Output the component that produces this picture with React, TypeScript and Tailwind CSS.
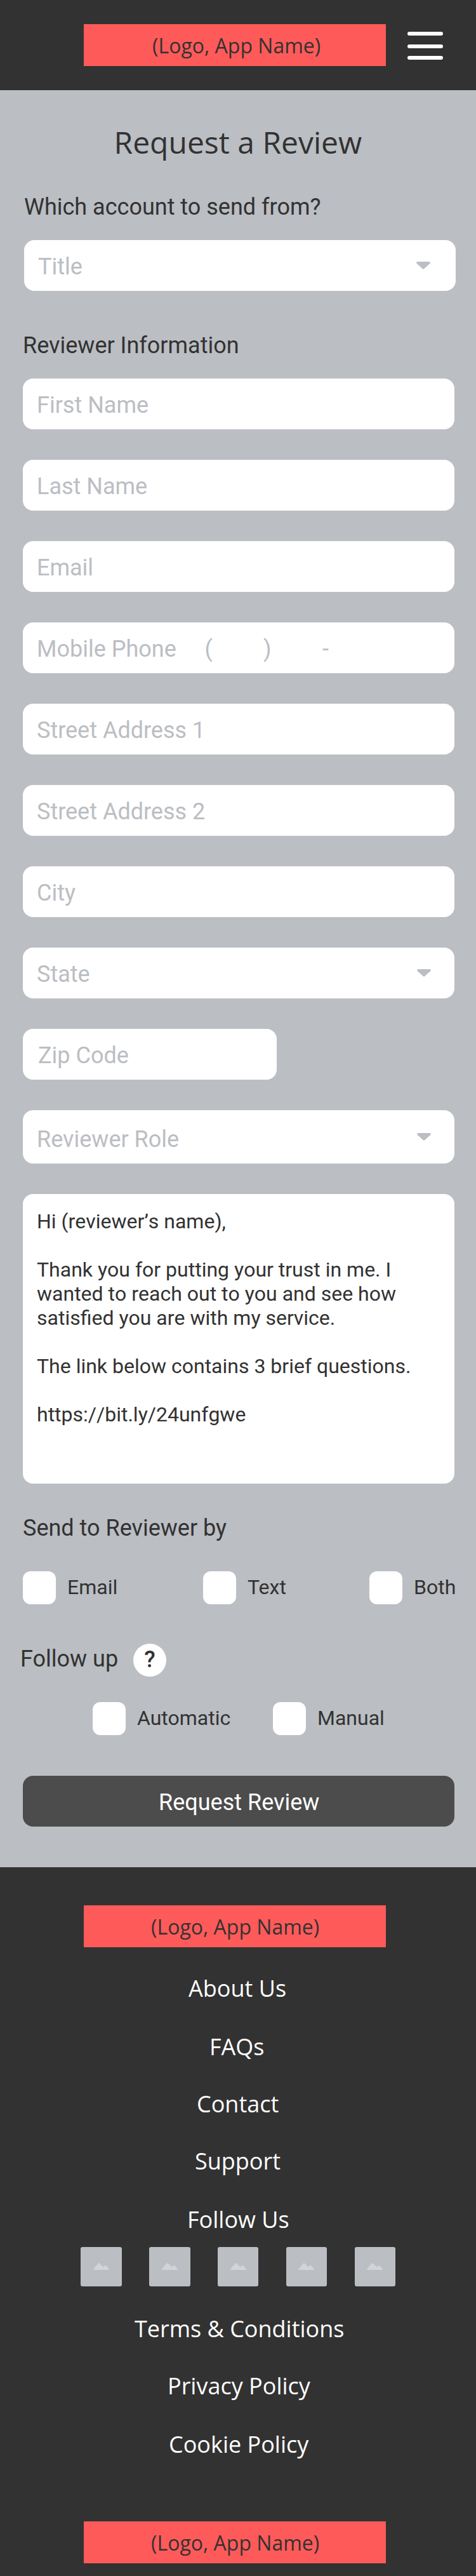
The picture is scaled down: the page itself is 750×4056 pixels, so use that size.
import React from "react";

const FIELDS = [
  "First Name",
  "Last Name",
  "Email",
  "Mobile Phone     (         )         -",
  "Street Address 1",
  "Street Address 2",
  "City",
];

const SOCIALS = ["one", "two", "three", "four", "five"];

function Logo({ className = "" }: { className?: string }) {
  return (
    <div
      className={`h-[66px] w-[476px] shrink-0 whitespace-nowrap bg-[#ff5a5a] font-['Open_Sans',sans-serif] text-[32px] leading-[67px] text-[#323232] ${className}`}
    >
      (Logo, App Name)
    </div>
  );
}

function Caret({ className }: { className: string }) {
  return (
    <svg viewBox="0 0 22 12" className={`h-3 w-[22px] shrink-0 fill-[#bbbec3] ${className}`}>
      <path d="M2 0H20C21.9 0 22.6 1.9 21.2 3L12.4 10.9C11.6 11.6 10.4 11.6 9.6 10.9L0.8 3C-0.6 1.9 0.1 0 2 0Z" />
    </svg>
  );
}

function Field({ text }: { text: string }) {
  return (
    <div className="h-20 w-[680px] whitespace-pre rounded-2xl bg-white pl-[22px] leading-[84px]">{text}</div>
  );
}

function Check({ label, className = "" }: { label: string; className?: string }) {
  return (
    <label className={`flex h-[52px] gap-[18px] ${className}`}>
      <span className="size-[52px] shrink-0 rounded-xl bg-white" />
      <span className="whitespace-nowrap text-[32px] leading-[50px]">{label}</span>
    </label>
  );
}

function Placeholder() {
  return (
    <div className="flex h-[62px] w-[64.4px] justify-center rounded-[3px] bg-[#bbbec3] pt-[25px]">
      <svg viewBox="0 0 25 11" className="h-[11px] w-[25px] fill-[#d1d4d8]">
        <path d="M1 11C0 11-.2 10 .4 9.3L7.6 .9C8.3 .1 9.7 .1 10.4 .9L15.6 6.8L18 4.2C18.6 3.5 19.4 3.5 20 4.2L24.6 9.3C25.2 10 25 11 24 11Z" />
      </svg>
    </div>
  );
}

export default function App() {
  return (
    <div className="flex w-[750px] flex-col bg-[#bbbec3] font-['Roboto',sans-serif] text-[36px] leading-[42px] text-[#323232]">
      <header className="flex h-[142px] items-start bg-[#323232] pl-[132px] pt-[38px]">
        <Logo className="pl-[108px]" />
        <button className="ml-[34px] mt-3 flex w-14 flex-col">
          <span className="h-1.5 rounded-full bg-white" />
          <span className="mt-3.5 h-1.5 rounded-full bg-white" />
          <span className="mt-3 h-1.5 rounded-full bg-white" />
        </button>
      </header>

      <main className="flex flex-col pb-16 pl-9">
        <h1 className="mt-[49px] pl-[143.5px] font-['Open_Sans',sans-serif] text-[48px] leading-[65px]">
          Request a Review
        </h1>

        <h2 className="mt-[49px] pl-0.5">Which account to send from?</h2>
        <div className="ml-0.5 mt-[31px] flex h-20 w-[680px] justify-between rounded-2xl bg-white pl-[22px] pr-10 leading-[84px] text-[#bbbec3]">
          <span>Title</span>
          <Caret className="mt-[34px]" />
        </div>

        <h2 className="mt-[65px]">Reviewer Information</h2>
        <div className="mt-[31px] flex flex-col gap-12 text-[#bbbec3]">
          {FIELDS.map((text) => (
            <Field key={text} text={text} />
          ))}
          <div className="flex h-20 w-[680px] justify-between rounded-2xl bg-white pl-[22px] pr-[37px] leading-[84px]">
            <span>State</span>
            <Caret className="mt-[34px]" />
          </div>
          <div className="h-20 w-[400px] rounded-2xl bg-white pl-6 leading-[84px]">Zip Code</div>
          <div className="flex h-[84px] w-[680px] justify-between rounded-2xl bg-white pl-[22px] pr-[37px] leading-[92px]">
            <span>Reviewer Role</span>
            <Caret className="mt-9" />
          </div>
        </div>

        <div className="mt-12 h-[456px] w-[680px] whitespace-nowrap rounded-2xl bg-white pl-[22px] pt-6 text-[32px] leading-[38px] [font-kerning:none]">
          <p>Hi (reviewer’s name),</p>
          <p className="mt-[38px]">
            Thank you for putting your trust in me. I<br />
            wanted to reach out to you and see how<br />
            satisfied you are with my service.
          </p>
          <p className="mt-[38px]">The link below contains 3 brief questions.</p>
          <p className="mt-[38px]">https://bit.ly/24unfgwe</p>
        </div>

        <h2 className="mt-[49px]">Send to Reviewer by</h2>
        <div className="mt-[47px] flex">
          <Check label="Email" className="w-[284px]" />
          <Check label="Text" className="w-[262px]" />
          <Check label="Both" />
        </div>

        <div className="-ml-1 mt-[62px] flex h-[52px]">
          <h2 className="w-[178px] leading-[48px]">Follow up</h2>
          <span className="size-[52px] rounded-full bg-white text-center font-medium leading-[50px]">?</span>
        </div>
        <div className="mt-10 flex pl-[110px]">
          <Check label="Automatic" className="w-[284px]" />
          <Check label="Manual" />
        </div>

        <button className="mt-16 h-20 w-[680px] rounded-2xl bg-[#4c4c4c] pl-[214px] text-left leading-[84px] text-white">
          Request Review
        </button>
      </main>

      <footer className="flex h-[1116px] flex-col bg-[#323232] pt-[60px] font-['Open_Sans',sans-serif] leading-[49px] text-white">
        <Logo className="ml-[132px] pl-[106px]" />
        <a className="mt-10 pl-[297px]">About Us</a>
        <a className="mt-[43px] pl-[330px]">FAQs</a>
        <a className="mt-[41px] pl-[310px]">Contact</a>
        <a className="mt-[41px] pl-[307px]">Support</a>
        <p className="mt-[43px] pl-[295px]">Follow Us</p>
        <div className="mt-[19px] flex gap-[43.4px] pl-[127.4px]">
          {SOCIALS.map((name) => (
            <Placeholder key={name} />
          ))}
        </div>
        <a className="mt-[42px] pl-[212px]">Terms &amp; Conditions</a>
        <a className="mt-[41px] pl-[264px]">Privacy Policy</a>
        <a className="mt-[43px] pl-[266px]">Cookie Policy</a>
        <Logo className="ml-[132px] mt-[97px] pl-[106px]" />
      </footer>
    </div>
  );
}
